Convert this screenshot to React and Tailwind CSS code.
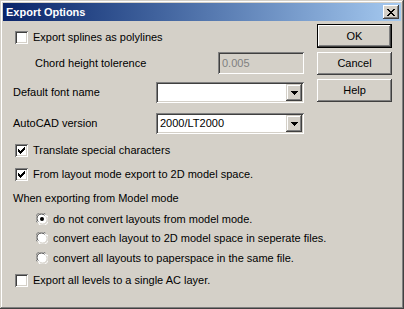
import React from 'react';

const font = { fontFamily: '"Liberation Sans", Arial, sans-serif' };

const Check = ({ checked }) => (
  <span className="w-[13px] h-[13px] shrink-0 bg-white flex items-center justify-center shadow-[inset_1px_1px_0_#808080,inset_-1px_-1px_0_#fff,inset_2px_2px_0_#404040,inset_-2px_-2px_0_#d4d0c8]">
    {checked && (
      <svg width="7" height="7" viewBox="0 0 7 7" shapeRendering="crispEdges">
        <rect x="6" y="0" width="1" height="1" />
        <rect x="5" y="1" width="2" height="1" />
        <rect x="0" y="2" width="1" height="1" />
        <rect x="4" y="2" width="3" height="1" />
        <rect x="0" y="3" width="2" height="1" />
        <rect x="3" y="3" width="3" height="1" />
        <rect x="0" y="4" width="5" height="1" />
        <rect x="1" y="5" width="3" height="1" />
        <rect x="2" y="6" width="1" height="1" />
      </svg>
    )}
  </span>
);

const Radio = ({ checked }) => (
  <svg width="12" height="12" viewBox="0 0 12 12" className="shrink-0">
    <circle cx="6" cy="6" r="5.5" fill="#fff" />
    <path d="M1.2 9.5 A5.5 5.5 0 0 1 9.5 1.2" fill="none" stroke="#808080" strokeWidth="1" />
    <path d="M2.3 8.6 A4.4 4.4 0 0 1 8.6 2.3" fill="none" stroke="#404040" strokeWidth="1" />
    <path d="M10.8 2.5 A5.5 5.5 0 0 1 2.5 10.8" fill="none" stroke="#fff" strokeWidth="1" />
    <path d="M9.7 3.4 A4.4 4.4 0 0 1 3.4 9.7" fill="none" stroke="#d4d0c8" strokeWidth="1" />
    {checked && <circle cx="6" cy="6" r="2" fill="#000" />}
  </svg>
);

const Arrow = () => (
  <span className="w-[16px] h-[17px] bg-[#d4d0c8] flex items-center justify-center shadow-[inset_-1px_-1px_0_#404040,inset_1px_1px_0_#d4d0c8,inset_-2px_-2px_0_#808080,inset_2px_2px_0_#fff]">
    <svg width="7" height="4" viewBox="0 0 7 4" shapeRendering="crispEdges">
      <path d="M0 0H7V1H6V2H5V3H4V4H3V3H2V2H1V1H0Z" />
    </svg>
  </span>
);

const Combo = ({ value }) => (
  <div className="w-[148px] h-[21px] bg-white flex items-center justify-between pl-[4px] pr-[2px] shadow-[inset_1px_1px_0_#808080,inset_-1px_-1px_0_#fff,inset_2px_2px_0_#404040,inset_-2px_-2px_0_#d4d0c8]">
    <span className="text-[11px] text-black">{value}</span>
    <Arrow />
  </div>
);

const Btn = ({ label, def }) => (
  <div className={def ? 'w-[75px] h-[24px] border border-black' : 'w-[75px] h-[23px]'}>
    <div className="w-full h-full flex items-center justify-center text-[11px] text-black bg-[#d4d0c8] shadow-[inset_-1px_-1px_0_#404040,inset_1px_1px_0_#fff,inset_-2px_-2px_0_#808080,inset_2px_2px_0_#d4d0c8]">
      {label}
    </div>
  </div>
);

const Row = ({ children, className = '' }) => (
  <div className={`flex items-center gap-[5px] text-[11px] text-black ${className}`}>{children}</div>
);

export default function App() {
  return (
    <div
      className="w-[404px] h-[309px] bg-[#d4d0c8] p-[3px] flex flex-col shadow-[inset_-1px_-1px_0_#404040,inset_1px_1px_0_#d4d0c8,inset_-2px_-2px_0_#808080,inset_2px_2px_0_#fff]"
      style={font}
    >
      {/* title bar */}
      <div className="h-[18px] flex items-center justify-between pl-[3px] pr-[2px] bg-gradient-to-r from-[#0a246a] to-[#a6caf0]">
        <span className="text-white font-bold text-[11px]">Export Options</span>
        <div className="w-[16px] h-[14px] bg-[#d4d0c8] flex items-center justify-center shadow-[inset_-1px_-1px_0_#404040,inset_1px_1px_0_#fff,inset_-2px_-2px_0_#808080,inset_2px_2px_0_#d4d0c8]">
          <svg width="8" height="7" viewBox="0 0 8 7" shapeRendering="crispEdges">
            <path d="M0 0H2L4 2.5L6 0H8L5 3.5L8 7H6L4 4.5L2 7H0L3 3.5Z" />
          </svg>
        </div>
      </div>

      <div className="flex-1 flex flex-col pl-[10px]">
        <div className="flex">
          <div className="w-[291px] flex flex-col">
            <Row className="h-[16px] mt-[8px] pl-[2px] gap-[4px]">
              <Check />
              <span>Export splines as polylines</span>
            </Row>
            <Row className="h-[22px] mt-[7px] justify-between pl-[22px]">
              <span>Chord height tolerence</span>
              <div className="w-[86px] h-[22px] bg-[#d4d0c8] flex items-center pl-[4px] text-[#808080] shadow-[inset_1px_1px_0_#808080,inset_-1px_-1px_0_#fff,inset_2px_2px_0_#404040,inset_-2px_-2px_0_#d4d0c8]">
                0.005
              </div>
            </Row>
            <Row className="h-[21px] mt-[8px] justify-between">
              <span>Default font name</span>
              <Combo value="" />
            </Row>
            <Row className="h-[21px] mt-[10px] justify-between">
              <span>AutoCAD version</span>
              <Combo value="2000/LT2000" />
            </Row>
          </div>
          <div className="ml-[13px] mt-[3px] flex flex-col gap-[4px]">
            <Btn label="OK" def />
            <Btn label="Cancel" />
            <Btn label="Help" />
          </div>
        </div>

        <Row className="h-[16px] mt-[8px] pl-[2px] gap-[4px]">
          <Check checked />
          <span>Translate special characters</span>
        </Row>
        <Row className="h-[16px] mt-[8px] pl-[2px] gap-[4px]">
          <Check checked />
          <span>From layout mode export to 2D model space.</span>
        </Row>
        <Row className="h-[16px] mt-[8px]">
          <span>When exporting from Model mode</span>
        </Row>
        <Row className="h-[16px] mt-[5px] pl-[23px]">
          <Radio checked />
          <span>do not convert layouts from model mode.</span>
        </Row>
        <Row className="h-[16px] mt-[3px] pl-[23px]">
          <Radio />
          <span>convert each layout to 2D model space in seperate files.</span>
        </Row>
        <Row className="h-[16px] mt-[4px] pl-[23px]">
          <Radio />
          <span>convert all layouts to paperspace in the same file.</span>
        </Row>
        <Row className="h-[16px] mt-[6px] pl-[2px] gap-[4px]">
          <Check />
          <span>Export all levels to a single AC layer.</span>
        </Row>
      </div>
    </div>
  );
}
